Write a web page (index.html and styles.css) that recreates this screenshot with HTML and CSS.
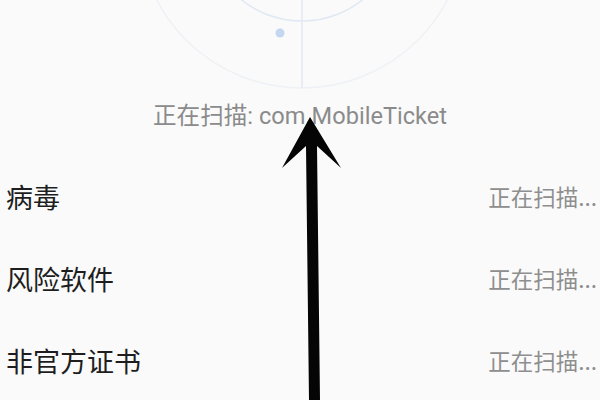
FILE: index.html
```html
<!DOCTYPE html>
<html lang="zh-CN">
<head>
<meta charset="utf-8">
<title>扫描</title>
<link rel="stylesheet" href="styles.css">
</head>
<body>
<div class="page">
  <div class="radar">
    <svg width="600" height="98" viewBox="0 0 600 98">
      <defs>
        <linearGradient id="glow" x1="0" y1="0" x2="1" y2="0">
          <stop offset="0" stop-color="#fdf3e6" stop-opacity="0"/>
          <stop offset="0.4" stop-color="#fdf3e6" stop-opacity="0.9"/>
          <stop offset="1" stop-color="#fdf3e6" stop-opacity="0"/>
        </linearGradient>
      </defs>
      <circle cx="302" cy="-76" r="164" fill="none" stroke="#eef1f5" stroke-width="1.5"/>
      <circle cx="302" cy="-76" r="97" fill="none" stroke="#dfe8f3" stroke-width="1.5"/>
      <line x1="302" y1="0" x2="302" y2="88" stroke="#e3e9f1" stroke-width="1.5"/>
      <line x1="262" y1="29" x2="354" y2="29" stroke="url(#glow)" stroke-width="3"/>
      <circle cx="280" cy="33" r="4.5" fill="#c3d8f0"/>
    </svg>
  </div>
  <div class="status">正在扫描: com.MobileTicket</div>
  <div class="list">
    <div class="row"><span class="name">病毒</span><span class="state">正在扫描...</span></div>
    <div class="row"><span class="name">风险软件</span><span class="state">正在扫描...</span></div>
    <div class="row"><span class="name">非官方证书</span><span class="state">正在扫描...</span></div>
  </div>
  <svg class="arrow" width="600" height="400" viewBox="0 0 600 400">
    <polygon points="310,117 341,168 317,146 320,400 309,400 306,146 282,168" fill="#050505"/>
  </svg>
</div>
</body>
</html>
```
FILE: styles.css
```css
html, body {
  margin: 0;
  padding: 0;
  background: #fafafa;
}
.page {
  position: relative;
  width: 600px;
  height: 400px;
  overflow: hidden;
  font-family: Roboto, "Noto Sans CJK SC", sans-serif;
}
.radar svg {
  display: block;
}
.status {
  height: 36px;
  line-height: 36px;
  text-align: center;
  font-size: 23.6px;
  color: #8b8b8b;
}
.list {
  padding-top: 21px;
}
.row {
  height: 82px;
  display: flex;
  align-items: center;
  justify-content: space-between;
  padding: 0 3px 0 6px;
}
.name {
  font-family: "Noto Sans CJK SC", sans-serif;
  font-size: 27px;
  color: #1e1e1e;
}
.state {
  font-family: "Noto Sans CJK SC", sans-serif;
  font-size: 22.5px;
  color: #8e8e8e;
}
.arrow {
  position: absolute;
  left: 0;
  top: 0;
  pointer-events: none;
}
```
